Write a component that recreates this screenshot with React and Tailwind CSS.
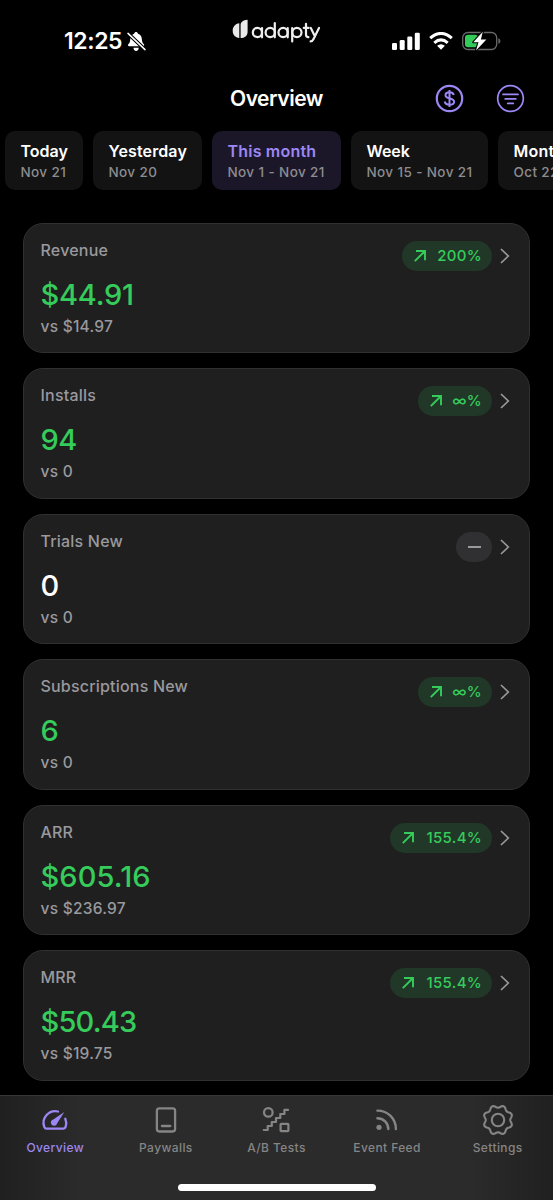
import React from "react";

const periods = [
  { title: "Today", range: "Nov 21", width: "w-[78px]", spacing: "tracking-[0px]" },
  { title: "Yesterday", range: "Nov 20", width: "w-[109px]", spacing: "tracking-[0.12px]" },
  { title: "This month", range: "Nov 1 - Nov 21", width: "w-[129px]", active: true, spacing: "tracking-[0.2px]" },
  { title: "Week", range: "Nov 15 - Nov 21", width: "w-[137px]", spacing: "tracking-[-0.1px]" },
  { title: "Month", range: "Oct 22 - Nov 21", width: "w-[137px]", spacing: "tracking-[0.2px]" },
];

const metrics = [
  { label: "Revenue", value: "$44.91", previous: "$14.97", change: "200%", pill: "w-[90px]", spacing: "tracking-[-0.2px]" },
  { label: "Installs", value: "94", previous: "0", change: "∞%", pill: "w-[74px]", spacing: "tracking-[-0.6px]" },
  { label: "Trials New", value: "0", previous: "0", spacing: "tracking-[0px]" },
  { label: "Subscriptions New", value: "6", previous: "0", change: "∞%", pill: "w-[74px]", spacing: "tracking-[0px]" },
  { label: "ARR", value: "$605.16", previous: "$236.97", change: "155.4%", pill: "w-[102px]", spacing: "tracking-[0.1px]" },
  { label: "MRR", value: "$50.43", previous: "$19.75", change: "155.4%", pill: "w-[102px]", spacing: "tracking-[-0.8px]" },
];

// Eight-lobed gear outline centred on (15, 15).
const gearPath =
  Array.from({ length: 96 }, (_, i) => {
    const angle = (i / 96) * Math.PI * 2;
    const radius = 13.5 - 1.3 * Math.cos(8 * angle);
    const x = (15 + radius * Math.cos(angle)).toFixed(2);
    const y = (15 + radius * Math.sin(angle)).toFixed(2);
    return `${i ? "L" : "M"}${x} ${y}`;
  }).join("") + "z";

function StatusBar() {
  return (
    <header className="flex h-[74px] shrink-0 items-start">
      <div className="flex w-[232px] items-center pl-[64px] pt-[28px]">
        <span className="w-[59px] whitespace-nowrap text-[23px] leading-[27px] font-semibold tracking-[-0.4px]">12:25</span>
        <svg className="mt-px ml-[4px] h-[20px] w-[19px]" viewBox="0 0 19 20">
          <path d="M2.2 14.2C1 14.2.5 13.1 1.5 12.1 3 10.6 3.1 8.8 3.3 6.7 3.6 3.8 5 2.3 7.1 1.7 7.4.6 8.2 0 9 0c.9 0 1.7.6 2 1.7 2.3.7 3.6 2.3 3.8 5 .2 2.2.4 3.9 1.9 5.4 1 1 .5 2.1-.8 2.1z" fill="#fff" />
          <path d="M6.4 15.8h5.4C11.5 17.9 10.4 19 9.1 19s-2.4-1.1-2.7-3.2z" fill="#fff" />
          <path d="M1 1.4 18 17.6" stroke="#000" strokeWidth="3.6" />
          <path d="M1 1.4 18 17.6" stroke="#fff" strokeWidth="1.5" strokeLinecap="round" />
        </svg>
      </div>
      <svg className="mt-[17px] h-[29px] w-[89px] shrink-0" viewBox="0 0 89 29">
        <path d="M7.3 6.3V21C3.2 20.7.7 17.7.7 13.8c0-3.9 2.6-7 6.6-7.5zM8.6 21V8c0-2.9 2.4-5 7-5.3v12c0 4-2.8 6.3-7 6.3z" fill="#e9e9e9" />
        <g fill="none" stroke="#eee" strokeWidth="2.2" strokeLinecap="round" strokeLinejoin="round">
          <circle cx="25.4" cy="15.5" r="4.6" />
          <path d="M30 11v9.3" />
          <circle cx="38.2" cy="15.5" r="4.6" />
          <path d="M42.8 6V20.3" />
          <circle cx="51.1" cy="15.5" r="4.6" />
          <path d="M55.7 11v9.3M60.2 11v13.4" />
          <circle cx="64.9" cy="15.5" r="4.6" />
          <path d="M74 6.8v10.7c0 2.2.8 2.7 2.4 2.7M71.8 10.9h4.7M78.8 11l4.2 8.4M87 11l-5.6 11.2c-.8 1.6-1.5 2.2-2.8 2.2" />
        </g>
      </svg>
      <div className="ml-[71px] flex items-center gap-[9px] pt-[30px]">
        <svg className="h-[18px] w-[28px]" viewBox="0 0 28 18" fill="#fff">
          <rect x="0" y="11" width="5" height="7" rx="1.3" /><rect x="7.7" y="8" width="5" height="10" rx="1.3" />
          <rect x="15.3" y="4.5" width="5" height="13.5" rx="1.3" /><rect x="22.8" y=".8" width="5" height="17.2" rx="1.3" />
        </svg>
        <svg className="h-[18px] w-[24px]" viewBox="0 0 24 18">
          <g fill="none" stroke="#fff" strokeWidth="3"><path d="M1.2 6.2Q12-3.3 22.8 6.2M5.3 10.8q6.7-5.8 13.4 0" /></g>
          <path d="M8.1 13.8q3.9-3.2 7.8 0L12 17.8z" fill="#fff" />
        </svg>
        <svg className="h-[22px] w-[39px]" viewBox="0 0 39 22">
          <rect x=".7" y="2.5" width="34" height="17" rx="5.2" fill="none" stroke="#69696b" strokeWidth="1.3" />
          <path d="M36.4 8.2c2.6.7 2.6 4.9 0 5.6z" fill="#69696b" />
          <rect x="3" y="4.7" width="13" height="12.6" rx="3" fill="#32cb59" />
          <path d="m20.8 1.8-9.5 10.4h5.2L14 20.5l10.4-11h-5.5z" fill="#fff" stroke="#000" strokeWidth="2.2" strokeLinejoin="round" />
          <path d="m20.8 1.8-9.5 10.4h5.2L14 20.5l10.4-11h-5.5z" fill="#fff" />
        </svg>
      </div>
    </header>
  );
}

function PeriodTabs() {
  return (
    <div className="flex h-[59px] w-full shrink-0 gap-[10px] overflow-hidden pl-[5px]">
      {periods.map((p) => (
        <button key={p.title} className={`h-[59px] shrink-0 rounded-[10px] pt-px pl-[15.5px] text-left whitespace-nowrap ${p.width} ${p.active ? "bg-[#1b1728]" : "bg-[#131313]"}`}>
          <span className={`block text-[16px] leading-[21px] font-semibold ${p.spacing} ${p.active ? "text-[#9d87f5]" : "text-white"}`}>{p.title}</span>
          <span className="block text-[13.5px] leading-[20px] font-medium tracking-[0.38px] text-[#8c8c90]">{p.range}</span>
        </button>
      ))}
    </div>
  );
}

function MetricCard({ label, value, previous, change, pill, spacing }) {
  return (
    <section className="flex h-[130.6px] shrink-0 justify-between rounded-[20px] border border-[#303031] bg-[#1f1f1f] pr-[19px] pl-[16.5px]">
      <div className="pt-[16px]">
        <h2 className="text-[16px] leading-[20px] font-medium tracking-[0.2px] text-[#99999e]">{label}</h2>
        <p className={`mt-[17px] text-[29px] leading-[36px] font-[550] ${spacing} ${change ? "text-[#35cc5b]" : "text-white"}`}>{value}</p>
        <p className="mt-[4px] text-[15.5px] leading-[20px] font-medium tracking-[0.25px] text-[#99999e]">vs {previous}</p>
      </div>
      <div className="mt-[17px] flex h-[30px] items-center">
        {change ? (
          <div className={`flex h-[30px] items-center justify-between rounded-full bg-[#213828] pr-[10px] pl-[12px] text-[#35cc5b] ${pill}`}>
            <svg className="h-[12px] w-[12px]" viewBox="0 0 12 12" fill="none" stroke="currentColor" strokeWidth="1.9"><path d="M.8 11.2 11 1M2 1h9v9.2" /></svg>
            <span className="text-[15px] leading-[20px] font-medium tracking-[0.3px]">{change}</span>
          </div>
        ) : (
          <div className="flex h-[30px] w-[36px] items-center justify-center rounded-full bg-[#303032]"><span className="h-[2px] w-[13px] bg-[#99999e]" /></div>
        )}
        <svg className="ml-[8px] h-[16px] w-[10px]" viewBox="0 0 10 16" fill="none" stroke="#99999c" strokeWidth="1.7"><path d="m1 1 7.3 7L1 15" /></svg>
      </div>
    </section>
  );
}

const navIcons = {
  Overview: (
    <g strokeWidth="2.3"><path d="M18 6.5A11.7 11.7 0 0 0 4.2 21.7c.6 1.4 1.1 1.9 2.3 1.9h17c1.2 0 1.8-.6 2.2-1.9.8-2.6.7-5.4-.4-8" /><path d="m24.3 6.9-7.1 11.3a3.2 3.2 0 1 1-3.9-3.8z" fill="currentColor" stroke="none" /></g>
  ),
  Paywalls: <g strokeWidth="2.3"><rect x="5.9" y="3.3" width="18.2" height="23.2" rx="2.4" /><path d="M10.9 21h8.4" /></g>,
  "A/B Tests": (
    <g strokeWidth="2.2"><circle cx="7.3" cy="7.4" r="4.3" /><rect x="19.6" y="18.8" width="7.8" height="7.4" rx=".6" /><path d="M27 4.9H23.4V9H19.3V13H15V17H10.8V21H6.7V25H2.8" /></g>
  ),
  "Event Feed": (
    <g strokeWidth="2.4"><circle cx="7" cy="22.3" r="2.6" fill="currentColor" stroke="none" /><path d="M5.4 5.6c10.5 0 18.5 8 18.5 18.5M5.4 13.2c6.2 0 10.9 4.7 10.9 10.9" /></g>
  ),
  Settings: <g strokeWidth="2.1"><path d={gearPath} /><circle cx="15" cy="15" r="6.2" /></g>,
};

function BottomNav() {
  return (
    <nav className="flex h-[105px] shrink-0 flex-col items-center border-t border-[#363636] bg-linear-to-r from-[#202020] via-[#2b2b2b] via-15% to-[#2b2b2b]">
      <div className="grid w-full grid-cols-5 bg-linear-to-l from-[#202020] to-transparent to-15% pt-[9px] pb-[45px]">
        {Object.entries(navIcons).map(([name, icon]) => (
          <button key={name} className={`flex flex-col items-center whitespace-nowrap ${name === "Overview" ? "text-[#9d87f5]" : "text-[#858585]"}`}>
            <svg className="h-[30px] w-[30px] overflow-visible" viewBox="0 0 30 30" fill="none" stroke="currentColor" strokeLinecap="round" strokeLinejoin="round">{icon}</svg>
            <span className="mt-[5px] text-[12px] leading-[16px] font-medium tracking-[0.4px]">{name}</span>
          </button>
        ))}
      </div>
      <div className="-mt-[17px] h-[7px] w-[198px] shrink-0 rounded-full bg-white" />
    </nav>
  );
}

export default function App() {
  return (
    <main className="flex h-[1200px] w-[553px] flex-col overflow-hidden bg-black font-['Inter',sans-serif] text-white">
      <StatusBar />
      <div className="grid h-[57px] shrink-0 grid-cols-3">
        <span />
        <h1 className="pt-[12px] text-center text-[21px] leading-[25px] font-semibold tracking-[-0.45px]">Overview</h1>
        <div className="flex items-start justify-end gap-[32px] pt-[10px] pr-[28px] text-[#9d87f5]">
          <svg className="h-[29px] w-[29px]" viewBox="0 0 29 29" fill="none" stroke="currentColor" strokeWidth="2.2"><circle cx="14.5" cy="14.5" r="12.7" /><path strokeWidth="2" d="M14.5 6v17M18.8 10.9c-.5-2-2-2.7-4.3-2.7-2.3 0-4 1.1-4 3 0 4.5 8.6 2.1 8.6 6.5 0 2-1.9 3.1-4.6 3.1-2.7 0-4.4-1.1-4.8-3.3" /></svg>
          <svg className="h-[29px] w-[29px]" viewBox="0 0 29 29" fill="none" stroke="currentColor" strokeWidth="1.7" strokeLinecap="round"><circle cx="14.5" cy="14.5" r="12.8" /><path d="M7 10.4h15M9.2 14.9h10.6M11.7 19.4h5.6" /></svg>
        </div>
      </div>
      <PeriodTabs />
      <div className="flex min-h-0 flex-1 flex-col gap-[15px] overflow-hidden px-[23px] pt-[32.5px]">
        {metrics.map((m) => <MetricCard key={m.label} {...m} />)}
      </div>
      <BottomNav />
    </main>
  );
}
